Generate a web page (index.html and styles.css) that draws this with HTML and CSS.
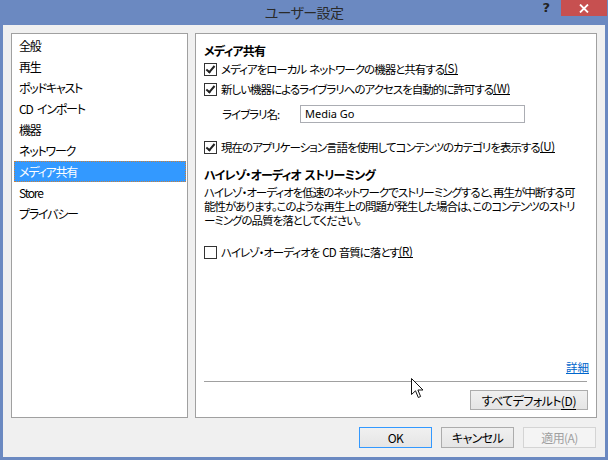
FILE: index.html
```html
<!DOCTYPE html>
<html lang="ja">
<head>
    <meta charset="UTF-8">
    <title>ユーザー設定</title>
    <link rel="stylesheet" href="styles.css">
</head>
<body>

    <div class="window">
        <div class="titlebar">
            <div></div>
            <div class="title">ユーザー設定</div>
            <div class="controls">
                <span class="help">?</span>
                <span class="close">
                    <svg width="10" height="9" viewBox="0 0 10 9"><path d="M1 0.5 L9 8.5 M9 0.5 L1 8.5" stroke="#fff" stroke-width="1.8"/></svg>
                </span>
            </div>
        </div>

        <div class="client">
            <div class="panels">
                <ul class="nav">
                    <li>全般</li>
                    <li>再生</li>
                    <li>ポッドキャスト</li>
                    <li>CD インポート</li>
                    <li>機器</li>
                    <li>ネットワーク</li>
                    <li class="selected">メディア共有</li>
                    <li>Store</li>
                    <li>プライバシー</li>
                </ul>

                <div class="page">
                    <h2>メディア共有</h2>
                    <label class="check"><span class="box checked"></span>メディアをローカル ネットワークの機器と共有する<u>(S)</u></label>
                    <label class="check"><span class="box checked"></span>新しい機器によるライブラリへのアクセスを自動的に許可する<u>(W)</u></label>
                    <div class="field">
                        <span class="field-label">ライブラリ名:</span>
                        <div class="input">Media Go</div>
                    </div>
                    <label class="check check-gap"><span class="box checked"></span>現在のアプリケーション言語を使用してコンテンツのカテゴリを表示する<u>(U)</u></label>

                    <h2 class="second">ハイレゾ・オーディオ ストリーミング</h2>
                    <p class="desc">ハイレゾ・オーディオを低速のネットワークでストリーミングすると、再生が中断する可<br>能性があります。このような再生上の問題が発生した場合は、このコンテンツのストリ<br>ーミングの品質を落としてください。</p>
                    <label class="check check-last"><span class="box"></span>ハイレゾ・オーディオを CD 音質に落とす<u>(R)</u></label>

                    <div class="page-foot">
                        <a class="more" href="#">詳細</a>
                        <div class="sep"></div>
                        <div class="foot-btn">
                            <button class="btn wide">すべてデフォルト<u>(D)</u></button>
                        </div>
                    </div>
                </div>
            </div>

            <div class="actions">
                <button class="btn default">OK</button>
                <button class="btn">キャンセル</button>
                <button class="btn disabled">適用(A)</button>
            </div>
        </div>

        <svg class="cursor" width="13" height="21" viewBox="0 0 13 21">
            <path d="M0.5 0.5 L0.5 16.5 L4.5 12.8 L7.3 19.5 L9.6 18.5 L6.9 12 L12 12 Z" fill="#fff" stroke="#111" stroke-width="1"/>
        </svg>
    </div>

</body>
</html>
```

FILE: styles.css
```css
body {
    margin: 0;
    width: 608px;
    height: 460px;
    overflow: hidden;
    background-color: #6b89c1;
    font-family: "Noto Sans CJK JP", "Noto Sans", sans-serif;
    font-size: 11.5px;
    letter-spacing: -1px;
    word-spacing: 1.5px;
    font-feature-settings: "palt";
    color: #000;
}

.window {
    position: relative;
    height: 460px;
}

.titlebar {
    display: grid;
    grid-template-columns: 1fr auto 1fr;
    height: 25px;
}

.title {
    font-size: 14px;
    letter-spacing: -0.6px;
    line-height: 24px;
    color: #2a2a2a;
}

.controls {
    display: flex;
    justify-content: flex-end;
    align-items: flex-start;
}

.help {
    font-family: "DejaVu Sans", sans-serif;
    font-weight: bold;
    font-size: 13px;
    line-height: 13px;
    letter-spacing: 0;
    color: #222;
    margin: 1px 11px 0 0;
}

.close {
    display: flex;
    justify-content: center;
    align-items: center;
    width: 46px;
    height: 16px;
    margin-right: 1px;
    background-color: #c75050;
}

.client {
    margin: 0 3px;
    height: 432px;
    box-sizing: border-box;
    padding: 8px;
    background-color: #f0f0f0;
}

.panels {
    display: flex;
    gap: 7px;
    height: 385px;
}

.nav {
    list-style: none;
    margin: 0;
    padding: 1px 0 0;
    width: 177px;
    box-sizing: border-box;
    background-color: #fff;
    border: 1px solid #a0a0a0;
    font-size: 12px;
    letter-spacing: -1.2px;
    word-spacing: 3px;
}

.nav li {
    height: 21px;
    line-height: 21px;
    margin: 0 1px 0 2px;
    padding-left: 5px;
    box-sizing: border-box;
}

.nav li.selected {
    background-color: #3399ff;
    color: #fff;
    outline: 1px dotted #c9803a;
    outline-offset: -1px;
}

.page {
    display: flex;
    flex-direction: column;
    width: 402px;
    box-sizing: border-box;
    padding: 9px 8px 7px 8px;
    background-color: #fff;
    border: 1px solid #a0a0a0;
}

.page h2 {
    margin: 0;
    font-size: 12px;
    font-weight: bold;
    line-height: 16px;
    letter-spacing: -0.8px;
}

.page h2.second {
    margin-top: 10px;
}

.check {
    display: flex;
    align-items: center;
    height: 20px;
    white-space: pre;
}

.check u, .btn u {
    text-decoration: none;
    border-bottom: 1px solid currentColor;
    line-height: 11px;
    letter-spacing: -0.3px;
}

.box {
    flex: none;
    width: 11px;
    height: 11px;
    border: 1px solid #333;
    background-color: #fff;
    margin-right: 4px;
    position: relative;
}

.box.checked::after {
    content: "";
    position: absolute;
    left: 3px;
    top: 0px;
    width: 3px;
    height: 7px;
    border: solid #222;
    border-width: 0 2px 2px 0;
    transform: rotate(40deg);
}

.check-gap {
    margin-top: 14px;
}

.check-last {
    margin-top: 15px;
}

.field {
    display: flex;
    align-items: center;
    margin-top: 6px;
    height: 18px;
}

.field-label {
    width: 78px;
    padding-left: 18px;
}

.input {
    width: 225px;
    height: 18px;
    box-sizing: border-box;
    border: 1px solid #abadb3;
    padding-left: 4px;
    line-height: 16px;
    font-size: 11px;
    letter-spacing: 0;
    word-spacing: 0;
    font-family: "Noto Sans", sans-serif;
}

.desc {
    margin: 2px 0 0;
    line-height: 14px;
    white-space: nowrap;
}

.page-foot {
    margin-top: auto;
    display: flex;
    flex-direction: column;
}

.more {
    align-self: flex-end;
    color: #0066cc;
    line-height: 16px;
    letter-spacing: 0;
    margin-right: -1px;
}

.sep {
    height: 1px;
    background-color: #a0a0a0;
    margin: 6px 1px 0 0;
}

.foot-btn {
    display: flex;
    justify-content: flex-end;
    margin-top: 8px;
}

.btn {
    height: 21px;
    width: 73px;
    padding: 0;
    box-sizing: border-box;
    border: 1px solid #acacac;
    background: linear-gradient(#f0f0f0, #e5e5e5);
    font-family: inherit;
    font-size: 12px;
    letter-spacing: -0.6px;
    font-feature-settings: "palt";
    color: #000;
}

.btn.wide {
    width: 118px;
    height: 20px;
}

.btn.default {
    border-color: #3399ff;
}

.btn.disabled {
    color: #a0a0a0;
    border-color: #d4d4d4;
    background: #f4f4f4;
}

.actions {
    display: flex;
    justify-content: flex-end;
    gap: 9px;
    margin-top: 9px;
    padding-right: 1px;
}

.cursor {
    position: absolute;
    left: 411px;
    top: 378px;
}
```
